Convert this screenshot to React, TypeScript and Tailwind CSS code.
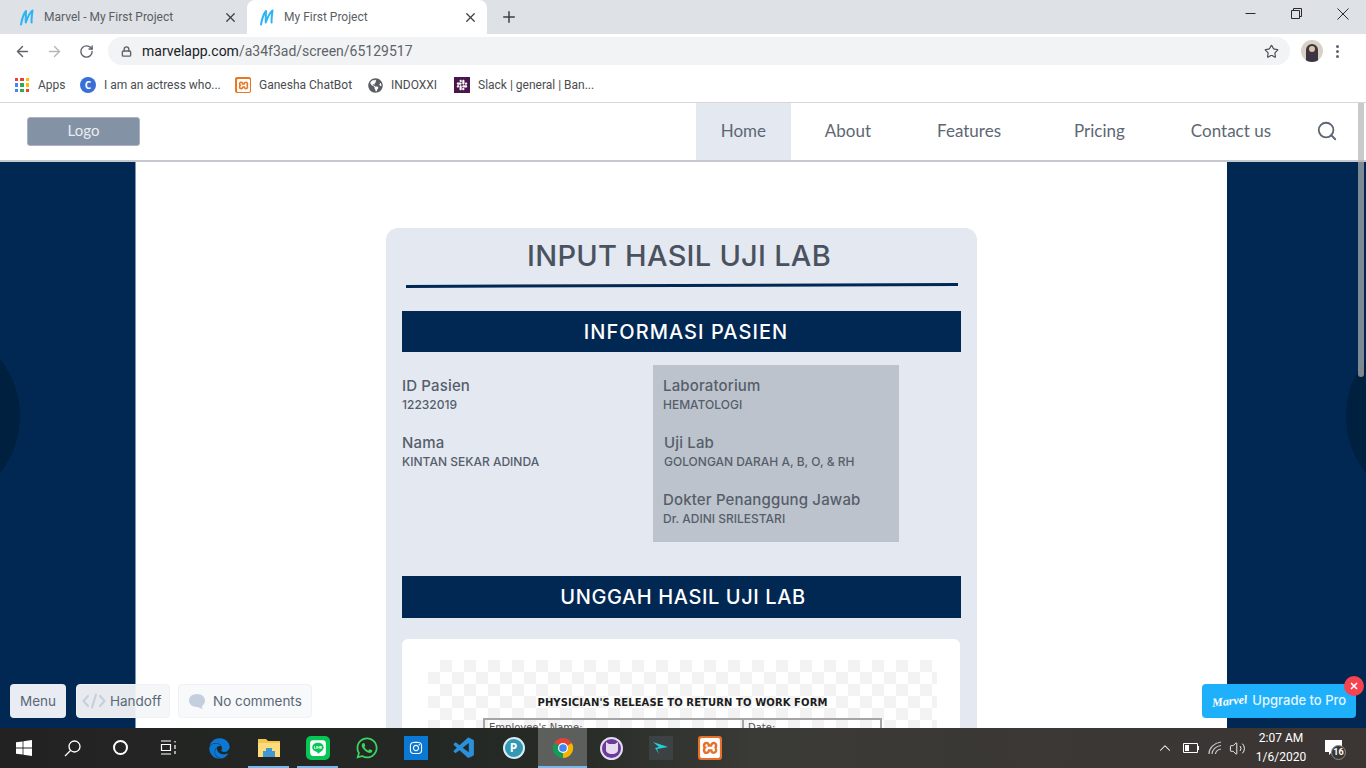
import { ArrowLeft, ArrowRight, ChevronUp, Lock, Plus, RotateCw, Search, Star, Volume2, X } from "lucide-react";
import { FaEdge, FaGlobeAmericas, FaInstagram, FaLine, FaSlack, FaWhatsapp } from "react-icons/fa";
import { SiXampp } from "react-icons/si";
import { VscVscode } from "react-icons/vsc";

const uiFont = "font-['Roboto',sans-serif]";
const cardFont = "font-['Inter',sans-serif]";

function MarvelMark() {
	return (
		<svg width="16" height="17" viewBox="0 0 16 17" fill="none" stroke="#2cb5f2" strokeWidth="2" strokeLinecap="round" strokeLinejoin="round">
			<path d="M2 15.5C3 10 4.5 5 7 2C7 6 6.5 10 6.8 13.5C8.5 8.5 10.5 4 13.5 1.5C13 6 12.3 10 12.6 13.5" />
		</svg>
	);
}

function Tab({ title, active }: { title: string; active?: boolean }) {
	return (
		<div className={`flex h-[34px] w-[240px] items-center rounded-t-lg pl-[12px] pr-[9px] ${active ? "bg-white" : "bg-[#dee1e6]"}`}>
			<MarvelMark />
			<span className={`ml-[9px] flex-1 text-[12px] text-[#5a5e63] ${uiFont}`}>{title}</span>
			<X size={15} strokeWidth={2} className="text-[#3c4043]" />
		</div>
	);
}

function TitleBar() {
	return (
		<div className="flex h-[34px] items-center bg-[#dee1e6] pl-[7px]">
			<Tab title="Marvel - My First Project" />
			<Tab title="My First Project" active />
			<Plus size={18} strokeWidth={2} className="ml-[13px] text-[#3c4043]" />
			<div className="ml-auto mb-[7px] flex items-center text-[#2b2b2b]">
				<svg className="mr-[35px]" width="11" height="11" viewBox="0 0 11 11" stroke="currentColor"><path d="M0.5 5.5H10.5" /></svg>
				<svg className="mr-[35px]" width="11" height="11" viewBox="0 0 11 11" fill="none" stroke="currentColor"><path d="M0.5 2.5H8.5V10.5H0.5ZM2.5 2.5V0.5H10.5V8.5H8.5" /></svg>
				<svg className="mr-[17px]" width="12" height="12" viewBox="0 0 12 12" stroke="currentColor"><path d="M0.5 0.5L11.5 11.5M11.5 0.5L0.5 11.5" /></svg>
			</div>
		</div>
	);
}

function Toolbar() {
	return (
		<div className="flex h-[34px] items-center bg-white pl-[14px]">
			<ArrowLeft size={17} strokeWidth={2} className="text-[#5f6368]" />
			<ArrowRight size={17} strokeWidth={2} className="ml-[15px] text-[#b5b7ba]" />
			<RotateCw size={15} strokeWidth={2.2} className="ml-[16px] text-[#5f6368]" />
			<div className="ml-[14px] flex h-[28px] w-[1182px] items-center rounded-full bg-[#f1f3f4] pl-[13px] pr-[10px]">
				<Lock size={11} strokeWidth={3} className="text-[#5f6368]" />
				<span className={`ml-[10px] text-[14px] text-[#202124] ${uiFont}`}>
					marvelapp.com<span className="text-[#5f6368]">/a34f3ad/screen/65129517</span>
				</span>
				<Star size={15} strokeWidth={1.8} className="ml-auto mr-[1px] text-[#45484c]" />
			</div>
			<div className="relative ml-[11px] flex h-[22px] w-[22px] items-center justify-center overflow-hidden rounded-full bg-[#d8d2c4]">
				<div className="mt-[6px] h-[20px] w-[12px] rounded-t-full bg-[#3c3440]" />
				<div className="absolute top-[6px] h-[6px] w-[6px] rounded-full bg-[#e3bfa8]" />
			</div>
			<div className="ml-[13px] flex flex-col gap-[2px]">
				<div className="h-[3px] w-[3px] rounded-full bg-[#5f6368]" />
				<div className="h-[3px] w-[3px] rounded-full bg-[#5f6368]" />
				<div className="h-[3px] w-[3px] rounded-full bg-[#5f6368]" />
			</div>
		</div>
	);
}

function AppsIcon() {
	const colors = ["#ea4335", "#ea4335", "#fbbc04", "#4285f4", "#34a853", "#fbbc04", "#4285f4", "#34a853", "#ea4335"];
	return (
		<div className="grid h-[14px] w-[14px] grid-cols-3 gap-[2px]">
			{colors.map((c, i) => (
				<div key={i} style={{ backgroundColor: c }} />
			))}
		</div>
	);
}

function Bookmarks() {
	const items = [
		{ label: "Apps", width: "w-[66px]", icon: <AppsIcon /> },
		{
			label: "I am an actress who...",
			width: "w-[155px]",
			icon: <div className="flex h-4 w-4 items-center justify-center rounded-full bg-[#3b6fd8] text-[10px] font-bold text-white">C</div>,
		},
		{
			label: "Ganesha ChatBot",
			width: "w-[132px]",
			icon: <div className="flex h-4 w-4 items-center justify-center rounded-[2px] bg-[#e87722]"><SiXampp size={13} color="#fff" /></div>,
		},
		{ label: "INDOXXI", width: "w-[87px]", icon: <FaGlobeAmericas size={15} color="#5a5e63" /> },
		{
			label: "Slack | general | Ban...",
			width: "w-[160px]",
			icon: <div className="flex h-4 w-4 items-center justify-center bg-[#4a154b]"><FaSlack size={12} color="#fff" /></div>,
		},
	];
	return (
		<div className="flex h-[35px] items-center border-b border-[#d6d6d6] bg-white pl-[14px]">
			{items.map((item) => (
				<div key={item.label} className={`flex items-center gap-[8px] ${item.width}`}>
					<div className="flex w-[16px] justify-center">{item.icon}</div>
					<span className={`text-[12px] whitespace-nowrap text-[#4a4d51] ${uiFont}`}>{item.label}</span>
				</div>
			))}
		</div>
	);
}

function NavBar() {
	const linkClass = "pb-[2px] text-[17px] text-[#5d6773]";
	return (
		<div className="flex h-[57px] items-center bg-white font-['Lato',sans-serif]">
			<div className="ml-[27px] flex h-[29px] w-[113px] items-center justify-center rounded-[3px] border border-[#aab3c1] bg-[#8492a6] pb-[2px] text-[15px] text-[#e8ecf2]">
				Logo
			</div>
			<div className="ml-auto flex h-full items-center">
				<div className={`flex h-full w-[95px] items-center justify-center bg-[#e3e8f1] ${linkClass}`}>Home</div>
				<span className={`ml-[34px] ${linkClass}`}>About</span>
				<span className={`ml-[66px] ${linkClass}`}>Features</span>
				<span className={`ml-[73px] ${linkClass}`}>Pricing</span>
				<span className={`ml-[66px] ${linkClass}`}>Contact us</span>
				<Search size={22} strokeWidth={2} className="mb-[2px] ml-[45px] mr-[28px] text-[#5d6773]" />
			</div>
		</div>
	);
}

function SectionBar({ title, className }: { title: string; className: string }) {
	return (
		<div className={`flex w-[559px] items-center justify-center bg-[#012753] text-[20px] font-medium text-white ${cardFont} ${className}`}>
			{title}
		</div>
	);
}

function Field({ label, value, indent }: { label: string; value: string; indent?: boolean }) {
	return (
		<div className="h-[57px]">
			<div className={`text-[15px] leading-[20px] font-medium tracking-[0.15px] text-[#565e6b] ${indent ? "ml-[1px]" : ""}`}>{label}</div>
			<div className={`mt-[1px] text-[12px] leading-[16px] font-medium text-[#565e6b] ${indent ? "ml-[1px]" : ""}`}>{value}</div>
		</div>
	);
}

function DocumentPreview() {
	return (
		<div className="mt-[21px] h-[200px] w-[558px] rounded-md bg-white px-[26px] pt-[21px]">
			<div className="flex h-[160px] w-[509px] flex-col items-center bg-[repeating-conic-gradient(#f3f3f3_0_25%,#ffffff_0_50%)] bg-[length:24px_24px] pt-[36px]">
				<div className="text-[10px] leading-[14px] font-bold tracking-[0.1px] text-[#1c1c1c] font-['DejaVu_Sans',sans-serif]">
					PHYSICIAN&apos;S RELEASE TO RETURN TO WORK FORM
				</div>
				<div className="mt-[8px] grid h-[40px] w-[399px] grid-cols-[259px_1fr] border-2 border-[#a5a5a5] text-[10px] text-[#555] font-['DejaVu_Sans',sans-serif]">
					<div className="border-r-2 border-[#a5a5a5] pl-[4px]">Employee&apos;s Name:</div>
					<div className="pl-[4px]">Date:</div>
				</div>
			</div>
		</div>
	);
}

function Card() {
	return (
		<div className={`h-[560px] w-[591px] rounded-t-xl bg-[#e3e8f1] pl-[16px] ${cardFont}`}>
			<h1 className="h-[56px] w-[554px] pt-[11px] text-center text-[29px] leading-[34px] font-medium tracking-[0.25px] text-[#4a5260]">
				INPUT HASIL UJI LAB
			</h1>
			<div className="ml-[4px] h-[3px] w-[552px] -rotate-[0.2deg] bg-[#012753]" />
			<div className="mt-[24px]">
				<SectionBar title="INFORMASI PASIEN" className="h-[41px] pl-[9px] tracking-[1.05px]" />
			</div>
			<div className="mt-[13px] grid h-[177px] grid-cols-[251px_246px] grid-rows-[177px]">
				<div className="pt-[11px]">
					<Field label="ID Pasien" value="12232019" />
					<Field label="Nama" value="KINTAN SEKAR ADINDA" />
				</div>
				<div className="overflow-hidden bg-[#bdc3cc] pl-[10px] pt-[11px]">
					<Field label="Laboratorium" value="HEMATOLOGI" />
					<Field label="Uji Lab" value="GOLONGAN DARAH A, B, O, & RH" indent />
					<Field label="Dokter Penanggung Jawab" value="Dr. ADINI SRILESTARI" />
				</div>
			</div>
			<div className="mt-[34px]">
				<SectionBar title="UNGGAH HASIL UJI LAB" className="h-[42px] pl-[3px] tracking-[0.6px]" />
			</div>
			<DocumentPreview />
		</div>
	);
}

function Overlays() {
	const chip = "flex h-[34px] items-center rounded-[4px] text-[13.5px] text-[#5b6776] font-['Inter',sans-serif]";
	return (
		<>
			<div className="absolute top-[222px] left-[-162px] h-[182px] w-[182px] rounded-full bg-[#00203f]" />
			<div className="absolute top-[222px] left-[1346px] h-[182px] w-[182px] rounded-full bg-[#00203f]" />
			<div className="absolute bottom-[10px] left-[10px] flex gap-[10px]">
				<div className={`${chip} w-[56px] justify-center bg-[#e9edf3]`}>Menu</div>
				<div className={`${chip} w-[94px] border border-[#eef1f5] bg-[#f3f5f8]/95 pl-[5px]`}>
					<svg width="24" height="16" viewBox="0 0 24 16" fill="none" stroke="#c5cedb" strokeWidth="2" strokeLinecap="round" strokeLinejoin="round">
						<path d="M6 3L1.5 8L6 13M18 3L22.5 8L18 13M14 1.5L10 14.5" />
					</svg>
					<span className="ml-[4px]">Handoff</span>
				</div>
				<div className={`${chip} ml-[-2px] w-[134px] border border-[#eef1f5] bg-[#f8f9fb] pl-[9px]`}>
					<svg width="18" height="17" viewBox="0 0 18 17" fill="#c4cfdd">
						<path d="M9 1C4.5 1 1 3.8 1 7.5S4.5 14 9 14C10.5 14 12 15.5 15 16C14 15 13.8 13.8 14 13C15.8 11.8 17 9.8 17 7.5C17 3.8 13.5 1 9 1Z" />
					</svg>
					<span className="ml-[7px]">No comments</span>
				</div>
			</div>
			<div className="absolute right-[10px] bottom-[10px] flex h-[34px] w-[154px] items-center rounded-[4px] bg-[#1fb0fb] pl-[10px] text-white">
				<span className="-rotate-6 font-['Liberation_Serif',serif] text-[12px] leading-none font-bold italic">Marvel</span>
				<span className="ml-[5px] text-[13px] font-medium font-['Inter',sans-serif] whitespace-nowrap text-[#e5f5ff]">Upgrade to Pro</span>
				<div className="absolute top-[-8px] right-[-8px] flex h-5 w-5 items-center justify-center rounded-full bg-[#f7434f]">
					<X size={10} strokeWidth={4} />
				</div>
			</div>
			<div className="absolute top-[0px] right-[2px] h-[274px] w-[6px] rounded-b-full bg-[#b4b4b4]/70" />
		</>
	);
}

function Viewer() {
	return (
		<div className="relative h-[625px] overflow-hidden">
			<NavBar />
			<div className="h-[2px] bg-[#c5c9cf]" />
			<div className="h-[566px] overflow-hidden bg-[#012753]">
				<div className="relative ml-[135px] h-full w-[1092px] border-l border-[#7d97b5] bg-white pl-[250px] pt-[66px]">
					<Card />
				</div>
			</div>
			<Overlays />
		</div>
	);
}

function TaskIcon({ children, active, running }: { children: React.ReactNode; active?: boolean; running?: boolean }) {
	return (
		<div className={`relative flex h-[40px] w-[49px] items-center justify-center ${active ? "bg-[#5c5f5b]" : ""}`}>
			{children}
			{running && <div className={`absolute bottom-0 h-[2px] bg-[#76b9ed] ${active ? "inset-x-0" : "inset-x-[4px]"}`} />}
		</div>
	);
}

function ChromeIcon() {
	return (
		<svg width="22" height="22" viewBox="0 0 24 24">
			<path d="M12 12L2.47 6.5A11 11 0 0 1 21.53 6.5Z" fill="#db4437" />
			<path d="M12 12L21.53 6.5A11 11 0 0 1 12 23Z" fill="#f4b400" />
			<path d="M12 12L12 23A11 11 0 0 1 2.47 6.5Z" fill="#0f9d58" />
			<circle cx="12" cy="12" r="5.5" fill="#fff" />
			<circle cx="12" cy="12" r="4.2" fill="#4285f4" />
		</svg>
	);
}

function Taskbar() {
	return (
		<div className="flex h-[40px] items-center bg-[linear-gradient(90deg,#222222_0%,#252a25_40%,#3a3a36_55%,#3b3533_100%)] text-white">
			<div className="flex w-[195px]">
				<div className="flex w-[48px] justify-center">
					<svg width="16" height="16" viewBox="0 0 16 16" fill="#fff">
						<path d="M0 2.3L6.6 1.4V7.6H0ZM7.4 1.3L16 0V7.6H7.4ZM0 8.4H6.6V14.6L0 13.7ZM7.4 8.4H16V16L7.4 14.7Z" />
					</svg>
				</div>
				<div className="flex w-[48px] justify-center">
					<svg width="17" height="17" viewBox="0 0 17 17" fill="none" stroke="#fff" strokeWidth="1.3">
						<circle cx="10.5" cy="6.5" r="5.5" />
						<path d="M6.5 10.5L1 16" />
					</svg>
				</div>
				<div className="flex w-[48px] justify-center">
					<div className="h-[15px] w-[15px] rounded-full border-[2px] border-white" />
				</div>
				<div className="flex w-[48px] justify-center">
					<svg width="17" height="15" viewBox="0 0 17 15" fill="none" stroke="#fff" strokeWidth="1.2">
						<path d="M1 1H11M1 14H11M1.5 4.5H10.5V10.5H1.5ZM15 1V2.5M15 5V9M15 11V14" />
					</svg>
				</div>
			</div>
			<TaskIcon><FaEdge size={21} color="#0a78d4" /></TaskIcon>
			<TaskIcon running>
				<svg width="22" height="20" viewBox="0 0 22 20">
					<path d="M0 1H8L10 3H22V19H0Z" fill="#f5c64f" />
					<path d="M0 5H22V19H0Z" fill="#fbdb7a" />
					<path d="M8 10H14V13H17V19H5V13H8Z" fill="#3f97d4" />
				</svg>
			</TaskIcon>
			<TaskIcon running><div className="flex h-[24px] w-[24px] items-center justify-center rounded-[5px] bg-[#06c755]"><FaLine size={18} color="#fff" /></div></TaskIcon>
			<TaskIcon><FaWhatsapp size={24} color="#3bd45f" /></TaskIcon>
			<TaskIcon><div className="flex h-[24px] w-[24px] items-center justify-center bg-[#0a78d4]"><FaInstagram size={14} color="#fff" /></div></TaskIcon>
			<TaskIcon><VscVscode size={25} color="#2a90dc" /></TaskIcon>
			<TaskIcon>
				<div className="flex h-[22px] w-[22px] items-center justify-center rounded-full border-[2px] border-[#d6eef2] bg-[#3397b5] text-[12px] font-bold text-white">P</div>
			</TaskIcon>
			<TaskIcon active running><ChromeIcon /></TaskIcon>
			<TaskIcon>
				<div className="flex h-[23px] w-[23px] items-center justify-center rounded-full border-[2px] border-[#e6dcf0] bg-[#6a3a9c]">
					<svg width="14" height="12" viewBox="0 0 14 12" fill="#e6dcf0">
						<path d="M1 0L4 2H10L13 0V8C13 10 11 12 7 12S1 10 1 8Z" />
					</svg>
				</div>
			</TaskIcon>
			<TaskIcon>
				<div className="flex h-[24px] w-[24px] items-center justify-center bg-[#3c4244]">
					<svg width="17" height="12" viewBox="0 0 17 12" fill="#24d0d6">
						<path d="M1 0L16 5L5 7L7 12L3 6L7 5Z" />
					</svg>
				</div>
			</TaskIcon>
			<TaskIcon><div className="flex h-[24px] w-[24px] items-center justify-center rounded-[3px] bg-[#e4702a]"><SiXampp size={20} color="#fff" /></div></TaskIcon>
			<div className={`ml-auto flex items-center ${uiFont}`}>
				<ChevronUp size={18} strokeWidth={1.4} />
				<svg className="ml-[9px]" width="16" height="10" viewBox="0 0 16 10" fill="none" stroke="#fff">
					<path d="M0.5 0.5H14.5V9.5H0.5ZM15.5 3V7" />
					<rect x="2" y="2" width="4" height="6" fill="#fff" stroke="none" />
				</svg>
				<svg className="ml-[9px]" width="15" height="14" viewBox="0 0 15 14" fill="none" stroke="#c9c9c9" strokeWidth="1.2">
					<path d="M1 13C1 7 6 2 13 1M4 13C4 9 8 5 13 4.5M7.5 13C7.5 11 9.5 8.5 13 8" />
				</svg>
				<Volume2 size={17} strokeWidth={1.3} className="ml-[6px]" />
				<div className="ml-[3px] w-[64px] text-center text-[12px] leading-[19px]">
					<div>2:07 AM</div>
					<div>1/6/2020</div>
				</div>
				<div className="relative ml-[12px] mr-[24px]">
					<svg width="17" height="16" viewBox="0 0 17 16" fill="#fff">
						<path d="M0 0H17V12H7L4 15V12H0Z" />
					</svg>
					<div className="absolute top-[5px] left-[6px] flex h-[15px] w-[15px] items-center justify-center rounded-full border border-[#8d8d8d] bg-[#3b3533] text-[9px] font-bold">16</div>
				</div>
			</div>
		</div>
	);
}

export default function App() {
	return (
		<div className="h-[768px] w-[1366px] overflow-hidden bg-white">
			<TitleBar />
			<Toolbar />
			<Bookmarks />
			<Viewer />
			<Taskbar />
		</div>
	);
}
